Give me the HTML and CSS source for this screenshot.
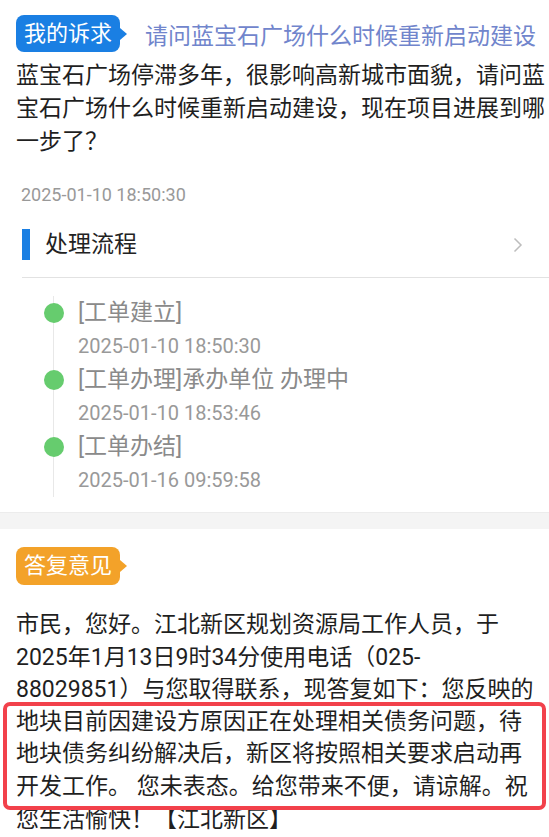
FILE: index.html
```html
<!DOCTYPE html>
<html lang="zh-CN">
<head>
    <meta charset="UTF-8">
    <title>诉求详情</title>
    <link rel="stylesheet" href="styles.css">
</head>
<body>

<div class="request">
    <div class="ask-row">
        <span class="ask-badge">我的诉求</span>
        <span class="ask-title">请问蓝宝石广场什么时候重新启动建设</span>
    </div>
    <p class="ask-text">蓝宝石广场停滞多年，很影响高新城市面貌，请问蓝宝石广场什么时候重新启动建设，现在项目进展到哪一步了？</p>
    <div class="ask-time">2025-01-10 18:50:30</div>

    <div class="flow-head">
        <span class="flow-bar"></span>
        <span class="flow-title">处理流程</span>
        <svg class="flow-more" width="10" height="16" viewBox="0 0 10 16">
            <polyline points="1.5,1.5 8,8 1.5,14.5" fill="none" stroke="#bdbdbd" stroke-width="1.5"/>
        </svg>
    </div>

    <ul class="timeline">
        <li>
            <div class="tl-title">[工单建立]</div>
            <div class="tl-time">2025-01-10 18:50:30</div>
        </li>
        <li>
            <div class="tl-title">[工单办理]承办单位 办理中</div>
            <div class="tl-time">2025-01-10 18:53:46</div>
        </li>
        <li>
            <div class="tl-title">[工单办结]</div>
            <div class="tl-time">2025-01-16 09:59:58</div>
        </li>
    </ul>
</div>

<div class="gap"></div>

<div class="reply">
    <span class="reply-badge">答复意见</span>
    <div class="reply-text">
        市民，您好。江北新区规划资源局工作人员，于<br>2025年1月13日9时34分使用电话（025-<br>88029851）与您取得联系，现答复如下：您反映的
        <div class="mark">地块目前因建设方原因正在处理相关债务问题，待<br>地块债务纠纷解决后，新区将按照相关要求启动再<br>开发工作。 您未表态。给您带来不便，请谅解。祝</div>
        您生活愉快！【江北新区】
    </div>
</div>

</body>
</html>
```

FILE: styles.css
```css
body {
    margin: 0;
    background-color: #ffffff;
    font-family: Roboto, "Noto Sans CJK SC", sans-serif;
    color: #1f1f1f;
}
.request {
    padding: 15px 0 15px 16px;
}
.ask-row {
    display: flex;
    align-items: center;
    height: 37px;
}
.ask-badge {
    position: relative;
    background-color: #1a7fe3;
    color: #ffffff;
    font-size: 22px;
    line-height: 37px;
    padding: 0 8px;
    border-radius: 8px;
}
.ask-badge::after {
    content: "";
    position: absolute;
    left: 100%;
    top: 50%;
    margin-top: -6px;
    border-left: 7px solid #1a7fe3;
    border-top: 6px solid transparent;
    border-bottom: 6px solid transparent;
}
.ask-title {
    margin-left: 25px;
    font-size: 23px;
    color: #7185cc;
    white-space: nowrap;
}
.ask-text {
    margin: 7px 0 0;
    font-size: 23px;
    line-height: 33px;
}
.ask-time {
    margin: 25px 0 0 5px;
    font-size: 18px;
    line-height: 24px;
    color: #999999;
}
.flow-head {
    display: flex;
    align-items: center;
    margin: 22px 0 0 6px;
    padding-bottom: 17px;
    border-bottom: 1px solid #e2e2e2;
}
.flow-bar {
    width: 8px;
    height: 31px;
    background-color: #1a7fe3;
}
.flow-title {
    flex: 1;
    margin-left: 15px;
    font-size: 23px;
    line-height: 31px;
    color: #222222;
}
.flow-more {
    margin-right: 26px;
}
.timeline {
    list-style: none;
    margin: 18px 0 0 37px;
    padding: 0 0 0 24px;
    border-left: 1px solid #e8e8e8;
}
.timeline li {
    position: relative;
}
.timeline li::before {
    content: "";
    position: absolute;
    left: -34.5px;
    top: 6.5px;
    width: 20px;
    height: 20px;
    border-radius: 50%;
    background-color: #66cc6e;
}
.tl-title {
    font-size: 23px;
    line-height: 33px;
    color: #8a8a8a;
}
.tl-time {
    font-size: 20px;
    line-height: 34px;
    color: #999999;
}
.gap {
    height: 16px;
    background-color: #f4f4f4;
    border-top: 1px solid #ececec;
}
.reply {
    padding: 18px 0 0 16px;
}
.reply-badge {
    display: inline-block;
    position: relative;
    background-color: #f3a229;
    color: #ffffff;
    font-size: 22px;
    line-height: 38px;
    padding: 0 8px;
    border-radius: 8px;
}
.reply-badge::after {
    content: "";
    position: absolute;
    left: 100%;
    top: 50%;
    margin-top: -6px;
    border-left: 7px solid #f3a229;
    border-top: 6px solid transparent;
    border-bottom: 6px solid transparent;
}
.reply-text {
    margin-top: 24px;
    font-size: 23px;
    line-height: 32.6px;
}
.mark {
    position: relative;
    margin: -5px 3px -6px -13px;
    padding: 0 0 2px 9px;
    border: 4px solid #f2414b;
    border-radius: 7px;
}
```
